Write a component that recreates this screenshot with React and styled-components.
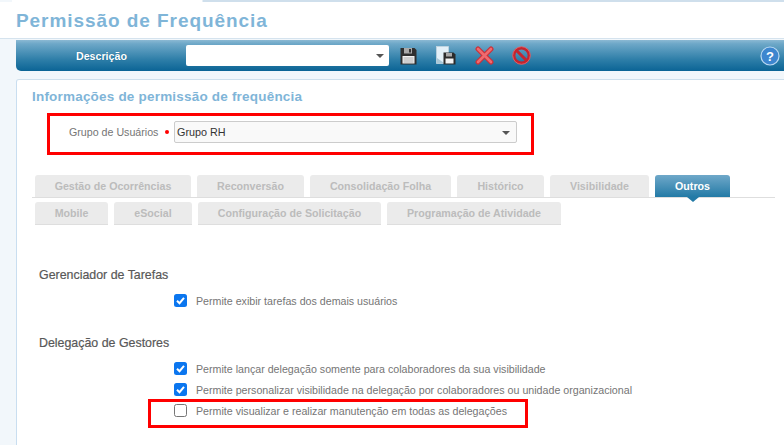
import React from 'react';
import styled, { createGlobalStyle } from 'styled-components';

const GlobalStyle = createGlobalStyle`
  html, body {
    margin: 0;
    padding: 0;
    background: #f2f7fb;
    font-family: "Liberation Sans", Arial, sans-serif;
    overflow: hidden;
  }
`;

const Page = styled.div`
  position: relative;
  width: 784px;
  height: 445px;
  overflow: hidden;
`;

const TopLine = styled.div`
  height: 2px;
  margin-left: 12px;
  background: linear-gradient(to right, #fff 0, #fff 190px, #cfdfec 191px);
`;

const TitleBar = styled.div`
  height: 37px;
  background: #fff;
  border-bottom: 1px solid #d5e3ee;
  box-sizing: border-box;
  padding: 8px 0 0 16px;
  margin-bottom: 1px;
`;

const PageTitle = styled.h1`
  margin: 0;
  font-size: 19px;
  line-height: 22px;
  font-weight: 700;
  letter-spacing: 0.94px;
  color: #7fb5d8;
`;

const Content = styled.div`
  margin-left: 16px;
`;

const Toolbar = styled.div`
  height: 31px;
  box-sizing: border-box;
  display: flex;
  align-items: center;
  border-bottom-left-radius: 5px;
  background: linear-gradient(to bottom, #8bb9d3 0, #6ea8c8 12%, #2f7fa9 62%, #0b6495 100%);
  color: #fff;
`;

const ToolbarLabel = styled.span`
  width: 170px;
  padding-left: 60px;
  box-sizing: border-box;
  font-size: 10.67px;
  font-weight: 700;
  text-shadow: 0 0 1px #0e5c85;
`;

const ToolbarSelect = styled.div`
  width: 203px;
  height: 21px;
  background: #fff;
  border-radius: 2px;
  position: relative;
  margin-right: 11px;
`;

const Arrow = styled.span`
  position: absolute;
  right: ${p => p.$right}px;
  top: 9px;
  width: 0;
  height: 0;
  border-left: 4px solid transparent;
  border-right: 4px solid transparent;
  border-top: 4px solid #555;
`;

const ToolIcon = styled.svg`
  display: block;
  flex: none;
  margin-left: ${p => p.$gap}px;
`;

const Spacer = styled.div`
  flex: 1;
`;

const HelpIcon = styled.svg`
  display: block;
  margin-right: 4px;
`;

const Card = styled.div`
  margin-top: 8px;
  height: 400px;
  background: #fff;
  border-top: 1px solid #cfe0ec;
  border-left: 1px solid #c9def0;
  border-top-left-radius: 3px;
  box-sizing: border-box;
  padding: 9px 0 0 15px;
`;

const CardTitle = styled.h2`
  margin: 0;
  font-size: 13.5px;
  line-height: 16px;
  font-weight: 700;
  letter-spacing: 0.2px;
  color: #7fb5d8;
`;

const GroupRow = styled.div`
  display: flex;
  align-items: center;
  margin-top: 16px;
  padding-left: 22px;
  margin-left: 15px;
  height: 22px;
`;

const GroupLabel = styled.span`
  font-size: 10.67px;
  color: #757575;
  width: 96px;
`;

const Required = styled.span`
  width: 4px;
  height: 4px;
  border-radius: 50%;
  background: #f00;
  margin-right: 5px;
`;

const GroupSelect = styled.div`
  position: relative;
  width: 343px;
  height: 22px;
  box-sizing: border-box;
  border: 1px solid #ccc;
  border-radius: 2px;
  background: #f9f9f9;
  font-size: 10.8px;
  line-height: 20px;
  padding-left: 2px;
  color: #333;
`;

const TabLines = styled.div`
  margin-top: 32px;
  margin-right: 9px;
`;

const TabLine = styled.div`
  display: flex;
  gap: 6px;
  padding-left: 3px;
  height: 23px;
  margin-bottom: ${p => p.$first ? '4px' : '0'};
  box-sizing: border-box;
  border-bottom: ${p => p.$first ? '1px solid #dedede' : 'none'};
`;

const Tab = styled.div`
  position: relative;
  width: ${p => p.$width}px;
  height: ${p => p.$second ? '23px' : '22px'};
  box-sizing: border-box;
  border-radius: 3px 3px 0 0;
  font-size: 10.67px;
  line-height: 22px;
  font-weight: 700;
  text-align: center;
  background: ${p => p.$active ? 'linear-gradient(to bottom, #6fa8c9, #237aa6)' : '#ebebeb'};
  color: ${p => p.$active ? '#fff' : '#bcbcbc'};
  border-bottom: ${p => p.$second ? '1px solid #dedede' : 'none'};

  ${p => p.$active && `
    &::after {
      content: '';
      position: absolute;
      left: 50%;
      bottom: -5px;
      margin-left: -6px;
      border-left: 6px solid transparent;
      border-right: 6px solid transparent;
      border-top: 5px solid #237aa6;
    }
  `}
`;

const Section = styled.div`
  margin-top: ${p => p.$top}px;
  padding-left: 7px;
`;

const SectionTitle = styled.h3`
  margin: 0 0 7px;
  font-size: 12.4px;
  line-height: 16px;
  font-weight: 400;
  color: #585858;
  -webkit-text-stroke: 0.2px #585858;
`;

const CheckRow = styled.div`
  display: flex;
  align-items: center;
  height: 21px;
  padding-left: 135px;
  font-size: 10.67px;
  color: #757575;
`;

const CheckBox = styled.span`
  width: 13px;
  height: 13px;
  box-sizing: border-box;
  border-radius: 2.5px;
  margin-right: 9px;
  display: flex;
  align-items: center;
  justify-content: center;
  background: ${p => p.$checked ? '#0b76ef' : '#fff'};
  border: ${p => p.$checked ? 'none' : '1px solid #767676'};
`;

const Highlight = styled.div`
  position: absolute;
  left: ${p => p.$x}px;
  top: ${p => p.$y}px;
  width: ${p => p.$w}px;
  height: ${p => p.$h}px;
  box-sizing: border-box;
  border: 3.5px solid #f00;
  pointer-events: none;
`;

const Floppy = () => (
  <ToolIcon $gap={0} width="17" height="18" viewBox="0 0 17 18">
    <path d="M0.5 1h14l2 2v14.5H0.5z" fill="#2f2f2f" />
    <rect x="4" y="1" width="8" height="5.5" fill="#a9a9a9" />
    <rect x="9" y="2" width="2" height="3.5" fill="#333" />
    <rect x="2.5" y="9" width="12" height="7.5" fill="#f2f2f2" />
    <path d="M3.5 11h10M3.5 13h10M3.5 15h10" stroke="#9a9a9a" strokeWidth="0.8" />
  </ToolIcon>
);

const SaveAs = () => (
  <ToolIcon $gap={19} width="20" height="19" viewBox="0 0 20 19">
    <rect x="0.5" y="0.5" width="12" height="17" fill="#e3f0f8" stroke="#cfdbe3" strokeWidth="0.6" />
    <path d="M1 17V12L8 17z" fill="#a9c7d6" />
    <path d="M7.5 6.5h10l2 2v10h-12z" fill="#2b2b2b" />
    <rect x="10" y="7" width="6" height="3.5" fill="#a8a8a8" />
    <rect x="9.5" y="12.5" width="8" height="5" fill="#f2f2f2" />
  </ToolIcon>
);

const RedX = () => (
  <ToolIcon $gap={19} width="19" height="19" viewBox="0 0 19 19">
    <path d="M3 3 L16 16 M16 3 L3 16" stroke="#c9323a" strokeWidth="5" strokeLinecap="round" />
    <path d="M3 3 L16 16 M16 3 L3 16" stroke="#ef6a6e" strokeWidth="2.6" strokeLinecap="round" />
  </ToolIcon>
);

const Forbidden = () => (
  <ToolIcon $gap={18} width="19" height="19" viewBox="0 0 19 19">
    <circle cx="9.5" cy="9.5" r="7.6" fill="none" stroke="#c4242e" strokeWidth="3" />
    <path d="M4.5 4.5 L14.5 14.5" stroke="#c4242e" strokeWidth="3" />
    <circle cx="9.5" cy="9.5" r="8.8" fill="none" stroke="#e87a80" strokeWidth="0.7" />
  </ToolIcon>
);

const Check = () => (
  <svg width="11" height="11" viewBox="0 0 11 11">
    <path d="M2 5.8 L4.5 8.2 L9 2.8" fill="none" stroke="#fff" strokeWidth="2" />
  </svg>
);

const firstTabs = [
  ['Gestão de Ocorrências', 156],
  ['Reconversão', 107],
  ['Consolidação Folha', 141],
  ['Histórico', 87],
  ['Visibilidade', 99],
  ['Outros', 75, true],
];

const secondTabs = [
  ['Mobile', 73],
  ['eSocial', 78],
  ['Configuração de Solicitação', 183],
  ['Programação de Atividade', 174],
];

const CheckItem = ({ checked, children }) => (
  <CheckRow>
    <CheckBox $checked={checked}>{checked && <Check />}</CheckBox>
    {children}
  </CheckRow>
);

const App = () => (
  <Page>
    <GlobalStyle />
    <TopLine />
    <TitleBar>
      <PageTitle>Permissão de Frequência</PageTitle>
    </TitleBar>
    <Content>
      <Toolbar>
        <ToolbarLabel>Descrição</ToolbarLabel>
        <ToolbarSelect><Arrow $right={5} /></ToolbarSelect>
        <Floppy />
        <SaveAs />
        <RedX />
        <Forbidden />
        <Spacer />
        <HelpIcon width="20" height="20" viewBox="0 0 20 20">
          <circle cx="10" cy="10" r="9" fill="#3d86cf" stroke="#b9d8f2" strokeWidth="1.2" />
          <text x="10" y="14.5" textAnchor="middle" fontSize="13" fontWeight="700" fill="#fff" fontFamily="Liberation Sans">?</text>
        </HelpIcon>
      </Toolbar>
      <Card>
        <CardTitle>Informações de permissão de frequência</CardTitle>
        <GroupRow>
          <GroupLabel>Grupo de Usuários</GroupLabel>
          <Required />
          <GroupSelect>Grupo RH<Arrow $right={6} /></GroupSelect>
        </GroupRow>
        <TabLines>
          <TabLine $first>
            {firstTabs.map(([label, width, active]) => (
              <Tab key={label} $width={width} $active={active}>{label}</Tab>
            ))}
          </TabLine>
          <TabLine>
            {secondTabs.map(([label, width]) => (
              <Tab key={label} $width={width} $second>{label}</Tab>
            ))}
          </TabLine>
        </TabLines>
        <Section $top={42}>
          <SectionTitle>Gerenciador de Tarefas</SectionTitle>
          <CheckItem checked>Permite exibir tarefas dos demais usuários</CheckItem>
        </Section>
        <Section $top={24}>
          <SectionTitle>Delegação de Gestores</SectionTitle>
          <CheckItem checked>Permite lançar delegação somente para colaboradores da sua visibilidade</CheckItem>
          <CheckItem checked>Permite personalizar visibilidade na delegação por colaboradores ou unidade organizacional</CheckItem>
          <CheckItem>Permite visualizar e realizar manutenção em todas as delegações</CheckItem>
        </Section>
      </Card>
    </Content>
    <Highlight $x={47} $y={113} $w={487} $h={42} />
    <Highlight $x={148} $y={399} $w={380} $h={29} />
  </Page>
);

export default App;
